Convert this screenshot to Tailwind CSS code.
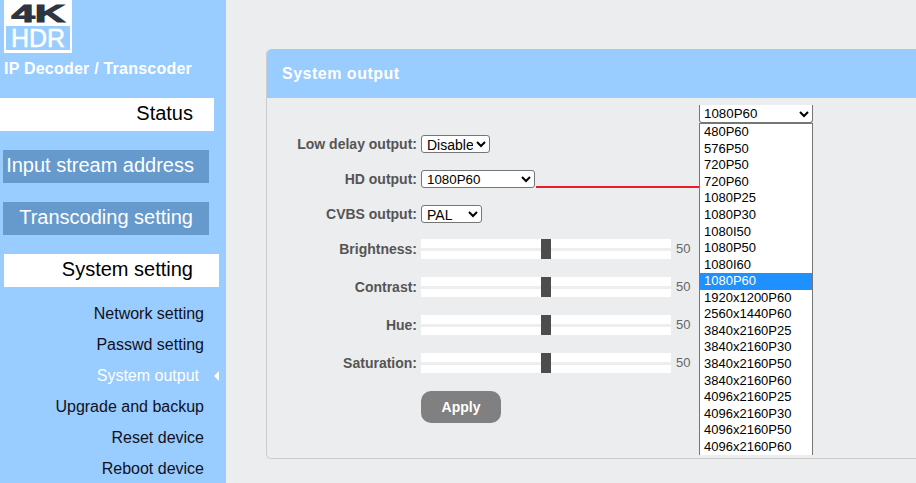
<!DOCTYPE html>
<html>
<head>
<meta charset="utf-8">
<script src="https://cdn.jsdelivr.net/npm/@tailwindcss/browser@4"></script>
</head>
<body class="m-0 h-[483px] w-[916px] overflow-hidden bg-[#ecedef] font-['Liberation_Sans',Arial,sans-serif]">
<div class="relative flex h-[483px] w-[916px] overflow-hidden">
  <!-- Sidebar -->
  <aside class="flex h-[483px] w-[226px] shrink-0 flex-col overflow-hidden bg-[#99ccff] [&>*]:shrink-0">
    <div class="ml-1 flex h-[53px] w-[68px] flex-col items-center bg-white px-[2px] pb-[3px]">
      <div class="h-[26px] shrink-0 pt-[2px] text-[24px] leading-none font-bold text-[#2e3440] [-webkit-text-stroke:1px_#2e3440] scale-x-[1.75]">4K</div>
      <div class="flex h-[24px] w-[64px] shrink-0 items-center justify-center bg-[#99ccff] text-[25px] leading-none font-normal text-white [-webkit-text-stroke:0.5px_#ffffff]">HDR</div>
    </div>
    <div class="mt-[7px] h-[18px] pl-1 text-[16px] leading-[18px] font-bold tracking-[0.22px] whitespace-nowrap text-white">IP Decoder / Transcoder</div>
    <div class="mt-[20px] flex h-[33px] w-[214px] items-center justify-end bg-white pr-[21px] pb-[4px] text-[20px] text-black">Status</div>
    <div class="mt-[19px] ml-[3px] flex h-[33px] w-[206px] items-center justify-end bg-[#6699cc] pr-[15px] pb-[4px] text-[20px] whitespace-nowrap text-white">Input stream address</div>
    <div class="mt-[19px] ml-[3px] flex h-[33px] w-[206px] items-center justify-end bg-[#6699cc] pr-[16px] pb-[4px] text-[20px] whitespace-nowrap text-white">Transcoding setting</div>
    <div class="mt-[19px] ml-1 flex h-[33px] w-[215px] items-center justify-end bg-white pr-[26px] pb-[4px] text-[20px] whitespace-nowrap text-black">System setting</div>
    <nav class="mt-[11px] flex w-[204px] flex-col items-end text-[16px] leading-[31px] whitespace-nowrap text-[#111122]">
      <a class="h-[31px]">Network setting</a>
      <a class="h-[31px]">Passwd setting</a>
      <a class="relative h-[31px] pr-[5px] text-white">System output<span class="absolute top-[11px] right-[-15px] h-0 w-0 border-y-[5px] border-r-[5px] border-y-transparent border-r-white"></span></a>
      <a class="h-[31px]">Upgrade and backup</a>
      <a class="h-[31px]">Reset device</a>
      <a class="h-[31px]">Reboot device</a>
    </nav>
  </aside>

  <!-- Main -->
  <main class="flex-1 pt-[49px] pl-[40px]">
    <section class="h-[410px] w-[660px] rounded-tl-[5px] rounded-bl-[5px] border border-r-0 border-t-0 border-[#cccccc]">
      <header class="flex h-[49px] items-center rounded-tl-[5px] bg-[#99ccff] pl-[15px] text-[16px] font-bold tracking-[0.5px] text-white">System output</header>
      <div class="flex flex-col pt-[37px] text-[14px] font-bold text-[#555555]">
        <div class="flex h-[18px] items-center">
          <label class="w-[150px] text-right whitespace-nowrap">Low delay output:</label>
          <select class="ml-1 h-[18px] w-[69px] rounded-[3px] border border-[#767676] bg-white pl-[1px] text-[14px] font-normal text-black"><option>Disable</option></select>
        </div>
        <div class="mt-[17px] flex h-[18px] items-center">
          <label class="w-[150px] text-right">HD output:</label>
          <select class="ml-1 h-[18px] w-[114px] rounded-[3px] border border-[#767676] bg-white pl-[1px] text-[13.33px] font-normal text-black"><option>1080P60</option></select>
        </div>
        <div class="mt-[17px] flex h-[18px] items-center">
          <label class="w-[150px] text-right">CVBS output:</label>
          <select class="ml-1 h-[18px] w-[61px] rounded-[3px] border border-[#767676] bg-white pl-[1px] text-[14px] font-normal text-black"><option>PAL</option></select>
        </div>
        <div class="mt-[16px] flex h-[20px] items-center">
          <label class="w-[150px] text-right">Brightness:</label>
          <div class="relative ml-1 flex h-[20px] w-[250px] items-center bg-white"><div class="h-[3px] w-full bg-[#eeeeee]"></div><div class="absolute top-0 left-[120px] h-[20px] w-[10px] bg-[#4d4d4d]"></div></div>
          <span class="ml-[5px] text-[13px] font-normal text-[#666666]">50</span>
        </div>
        <div class="mt-[18px] flex h-[20px] items-center">
          <label class="w-[150px] text-right">Contrast:</label>
          <div class="relative ml-1 flex h-[20px] w-[250px] items-center bg-white"><div class="h-[3px] w-full bg-[#eeeeee]"></div><div class="absolute top-0 left-[120px] h-[20px] w-[10px] bg-[#4d4d4d]"></div></div>
          <span class="ml-[5px] text-[13px] font-normal text-[#666666]">50</span>
        </div>
        <div class="mt-[18px] flex h-[20px] items-center">
          <label class="w-[150px] text-right">Hue:</label>
          <div class="relative ml-1 flex h-[20px] w-[250px] items-center bg-white"><div class="h-[3px] w-full bg-[#eeeeee]"></div><div class="absolute top-0 left-[120px] h-[20px] w-[10px] bg-[#4d4d4d]"></div></div>
          <span class="ml-[5px] text-[13px] font-normal text-[#666666]">50</span>
        </div>
        <div class="mt-[18px] flex h-[20px] items-center">
          <label class="w-[150px] text-right">Saturation:</label>
          <div class="relative ml-1 flex h-[20px] w-[250px] items-center bg-white"><div class="h-[3px] w-full bg-[#eeeeee]"></div><div class="absolute top-0 left-[120px] h-[20px] w-[10px] bg-[#4d4d4d]"></div></div>
          <span class="ml-[5px] text-[13px] font-normal text-[#666666]">50</span>
        </div>
        <button class="mt-[18px] ml-[154px] h-[32px] w-[80px] rounded-[10px] bg-[#808080] text-[14px] font-bold text-white">Apply</button>
      </div>
    </section>
  </main>

  <!-- Red connector -->
  <div class="absolute top-[186px] left-[536px] h-[2px] w-[164px] bg-[#ee1c25]"></div>

  <!-- Open dropdown overlay -->
  <div class="absolute top-[105px] left-[699px] w-[114px]">
    <select class="block h-[18px] w-[114px] rounded-b-[3px] border-x border-b border-[#767676] bg-white text-[13.33px] text-black"><option>1080P60</option></select>
    <ul class="h-[332px] w-[114px] border-x border-t border-[#767676] bg-white pt-[0.3px] text-[13px] leading-[16.55px] text-black">
      <li class="h-[16.55px] pl-1">480P60</li>
      <li class="h-[16.55px] pl-1">576P50</li>
      <li class="h-[16.55px] pl-1">720P50</li>
      <li class="h-[16.55px] pl-1">720P60</li>
      <li class="h-[16.55px] pl-1">1080P25</li>
      <li class="h-[16.55px] pl-1">1080P30</li>
      <li class="h-[16.55px] pl-1">1080I50</li>
      <li class="h-[16.55px] pl-1">1080P50</li>
      <li class="h-[16.55px] pl-1">1080I60</li>
      <li class="h-[16.55px] bg-[#1e90ff] pl-1 text-white">1080P60</li>
      <li class="h-[16.55px] pl-1">1920x1200P60</li>
      <li class="h-[16.55px] pl-1">2560x1440P60</li>
      <li class="h-[16.55px] pl-1">3840x2160P25</li>
      <li class="h-[16.55px] pl-1">3840x2160P30</li>
      <li class="h-[16.55px] pl-1">3840x2160P50</li>
      <li class="h-[16.55px] pl-1">3840x2160P60</li>
      <li class="h-[16.55px] pl-1">4096x2160P25</li>
      <li class="h-[16.55px] pl-1">4096x2160P30</li>
      <li class="h-[16.55px] pl-1">4096x2160P50</li>
      <li class="h-[16.55px] pl-1">4096x2160P60</li>
    </ul>
  </div>
</div>
</body>
</html>
